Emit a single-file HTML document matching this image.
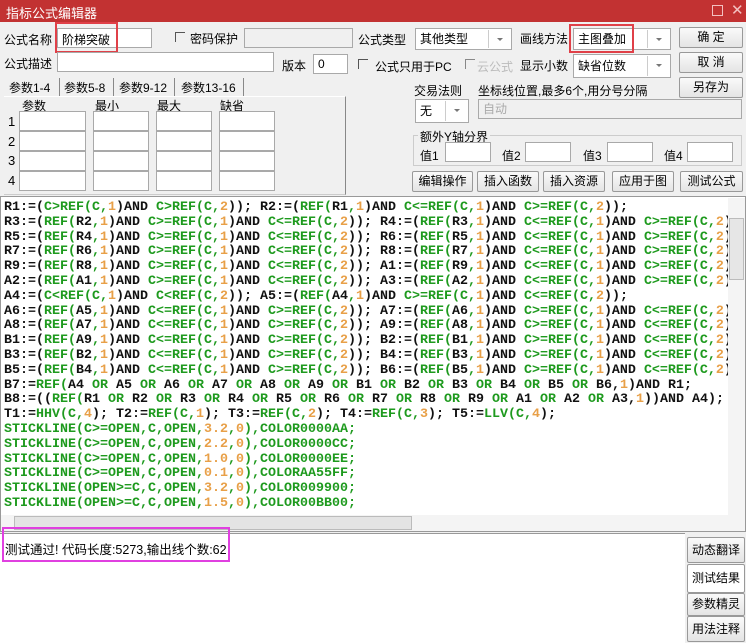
<!DOCTYPE html>
<html><head><meta charset="utf-8">
<style>
*{box-sizing:border-box;margin:0;padding:0}
body{width:746px;height:643px;overflow:hidden;background:#f0f0f0;position:relative;font-family:"Liberation Sans","Noto Sans CJK SC",sans-serif;font-size:12px;color:#000}
.a{position:absolute;white-space:nowrap}
.in{position:absolute;background:#fff;border:1px solid #a9a9a9}
.btn{position:absolute;background:linear-gradient(#fafafa,#e4e4e4);border:1px solid #999;text-align:center;font-size:12px;line-height:18px;border-radius:2px}
.sel{position:absolute;background:#fff;border:1px solid #a9a9a9;padding-left:4px;line-height:20px}
.sel:after{content:"";position:absolute;right:8px;top:9px;border:3px solid transparent;border-top:3px solid #777}
.sel i{position:absolute;right:22px;top:1px;bottom:1px;border-left:1px solid #ccc}
.cb{position:absolute;width:10px;height:10px;border-left:1px solid #555;border-top:1px solid #555}
.red{position:absolute;border:2px solid #e04048}
#code{position:absolute;left:1px;top:198px;width:727px;height:316px;background:#fff;overflow:hidden;font-family:"Liberation Mono",monospace;font-weight:bold;font-size:13.33px;line-height:14.8px;padding:3px 0 0 3px;color:#111}
#code div{white-space:pre;height:14.8px}
g{color:#1e9a1e}o{color:#e8a048}
</style></head><body>
<div class="a" style="left:0;top:0;width:746px;height:22px;background:#c23232"></div>
<div class="a" style="left:6px;top:3px;color:#fff;font-size:13px">指标公式编辑器</div>
<div class="a" style="left:712px;top:5px;width:11px;height:11px;border:1px solid #f3c0c0"></div>
<div class="a" style="left:731px;top:1px;color:#f3c0c0;font-size:15px">✕</div>

<div class="a" style="left:4px;top:31px">公式名称</div>
<div class="in" style="left:57px;top:28px;width:95px;height:20px"></div>
<div class="a" style="left:62px;top:31px">阶梯突破</div>
<div class="red" style="left:55px;top:22px;width:63px;height:31px"></div>
<div class="cb" style="left:175px;top:32px"></div>
<div class="a" style="left:190px;top:30px">密码保护</div>
<div class="in" style="left:244px;top:28px;width:109px;height:20px;background:#f0f0f0"></div>
<div class="a" style="left:358px;top:31px">公式类型</div>
<div class="sel" style="left:415px;top:28px;width:97px;height:22px">其他类型<i></i></div>
<div class="a" style="left:520px;top:30px">画线方法</div>
<div class="sel" style="left:573px;top:28px;width:98px;height:22px">主图叠加<i></i></div>
<div class="red" style="left:569px;top:24px;width:65px;height:29px"></div>
<div class="btn" style="left:679px;top:27px;width:64px;height:21px">确 定</div>

<div class="a" style="left:4px;top:55px">公式描述</div>
<div class="in" style="left:57px;top:52px;width:217px;height:20px"></div>
<div class="a" style="left:282px;top:57px">版本</div>
<div class="in" style="left:313px;top:54px;width:35px;height:20px;padding-left:4px;line-height:18px">0</div>
<div class="cb" style="left:358px;top:59px"></div>
<div class="a" style="left:375px;top:58px">公式只用于PC</div>
<div class="cb" style="left:465px;top:59px;border-color:#888"></div>
<div class="a" style="left:477px;top:58px;color:#bbb">云公式</div>
<div class="a" style="left:520px;top:57px">显示小数</div>
<div class="sel" style="left:573px;top:54px;width:98px;height:24px;line-height:22px">缺省位数<i></i></div>
<div class="btn" style="left:679px;top:52px;width:64px;height:21px">取 消</div>

<div class="a" style="left:9px;top:79px">参数1-4</div>
<div class="a" style="left:59px;top:78px;height:18px;border-left:1px solid #888"></div>
<div class="a" style="left:64px;top:79px">参数5-8</div>
<div class="a" style="left:113px;top:78px;height:18px;border-left:1px solid #888"></div>
<div class="a" style="left:119px;top:79px">参数9-12</div>
<div class="a" style="left:174px;top:78px;height:18px;border-left:1px solid #888"></div>
<div class="a" style="left:181px;top:79px">参数13-16</div>
<div class="a" style="left:243px;top:78px;height:18px;border-left:1px solid #888"></div>
<div class="a" style="left:4px;top:96px;width:342px;height:99px;border-right:1px solid #888;border-bottom:1px solid #ccc;border-top:1px solid #fff"></div>
<div class="a" style="left:22px;top:97px">参数</div>
<div class="a" style="left:95px;top:97px">最小</div>
<div class="a" style="left:157px;top:97px">最大</div>
<div class="a" style="left:220px;top:97px">缺省</div>
<div class="a" style="left:8px;top:114px;font-size:13px">1</div>
<div class="a" style="left:8px;top:134px;font-size:13px">2</div>
<div class="a" style="left:8px;top:153px;font-size:13px">3</div>
<div class="a" style="left:8px;top:173px;font-size:13px">4</div>
<div class="in" style="left:19px;top:111px;width:67px;height:20px"></div><div class="in" style="left:93px;top:111px;width:56px;height:20px"></div><div class="in" style="left:156px;top:111px;width:56px;height:20px"></div><div class="in" style="left:219px;top:111px;width:56px;height:20px"></div>
<div class="in" style="left:19px;top:131px;width:67px;height:20px"></div><div class="in" style="left:93px;top:131px;width:56px;height:20px"></div><div class="in" style="left:156px;top:131px;width:56px;height:20px"></div><div class="in" style="left:219px;top:131px;width:56px;height:20px"></div>
<div class="in" style="left:19px;top:151px;width:67px;height:20px"></div><div class="in" style="left:93px;top:151px;width:56px;height:20px"></div><div class="in" style="left:156px;top:151px;width:56px;height:20px"></div><div class="in" style="left:219px;top:151px;width:56px;height:20px"></div>
<div class="in" style="left:19px;top:171px;width:67px;height:20px"></div><div class="in" style="left:93px;top:171px;width:56px;height:20px"></div><div class="in" style="left:156px;top:171px;width:56px;height:20px"></div><div class="in" style="left:219px;top:171px;width:56px;height:20px"></div>

<div class="a" style="left:414px;top:82px">交易法则</div>
<div class="a" style="left:478px;top:82px">坐标线位置,最多6个,用分号分隔</div>
<div class="btn" style="left:679px;top:77px;width:64px;height:21px">另存为</div>
<div class="sel" style="left:415px;top:99px;width:54px;height:24px;line-height:22px">无<i></i></div>
<div class="in" style="left:478px;top:99px;width:264px;height:20px;background:#f0f0f0;color:#aaa;padding-left:4px;line-height:18px">自动</div>
<div class="a" style="left:413px;top:135px;width:329px;height:31px;border:1px solid #ccc"></div>
<div class="a" style="left:418px;top:128px;background:#f0f0f0;padding:0 2px">额外Y轴分界</div>
<div class="a" style="left:420px;top:147px">值1</div><div class="in" style="left:445px;top:142px;width:46px;height:20px"></div>
<div class="a" style="left:502px;top:147px">值2</div><div class="in" style="left:525px;top:142px;width:46px;height:20px"></div>
<div class="a" style="left:583px;top:147px">值3</div><div class="in" style="left:607px;top:142px;width:46px;height:20px"></div>
<div class="a" style="left:664px;top:147px">值4</div><div class="in" style="left:687px;top:142px;width:46px;height:20px"></div>
<div class="btn" style="left:412px;top:171px;width:61px;height:21px">编辑操作</div>
<div class="btn" style="left:477px;top:171px;width:62px;height:21px">插入函数</div>
<div class="btn" style="left:543px;top:171px;width:62px;height:21px">插入资源</div>
<div class="btn" style="left:612px;top:171px;width:62px;height:21px">应用于图</div>
<div class="btn" style="left:680px;top:171px;width:63px;height:21px">测试公式</div>

<div class="a" style="left:0;top:196px;width:746px;height:336px;border:1px solid #999;background:#fff"></div>
<div id="code">
<div>R1:=(<g>C&gt;REF(C,</g><o>1</o>)AND <g>C&gt;REF(C,</g><o>2</o>)); R2:=(<g>REF(</g>R1<g>,</g><o>1</o>)AND <g>C&lt;=REF(C,</g><o>1</o>)AND <g>C&gt;=REF(C,</g><o>2</o>));</div>
<div>R3:=(<g>REF(</g>R2<g>,</g><o>1</o>)AND <g>C&gt;=REF(C,</g><o>1</o>)AND <g>C&lt;=REF(C,</g><o>2</o>)); R4:=(<g>REF(</g>R3<g>,</g><o>1</o>)AND <g>C&lt;=REF(C,</g><o>1</o>)AND <g>C&gt;=REF(C,</g><o>2</o>));</div>
<div>R5:=(<g>REF(</g>R4<g>,</g><o>1</o>)AND <g>C&gt;=REF(C,</g><o>1</o>)AND <g>C&lt;=REF(C,</g><o>2</o>)); R6:=(<g>REF(</g>R5<g>,</g><o>1</o>)AND <g>C&lt;=REF(C,</g><o>1</o>)AND <g>C&gt;=REF(C,</g><o>2</o>));</div>
<div>R7:=(<g>REF(</g>R6<g>,</g><o>1</o>)AND <g>C&gt;=REF(C,</g><o>1</o>)AND <g>C&lt;=REF(C,</g><o>2</o>)); R8:=(<g>REF(</g>R7<g>,</g><o>1</o>)AND <g>C&lt;=REF(C,</g><o>1</o>)AND <g>C&gt;=REF(C,</g><o>2</o>));</div>
<div>R9:=(<g>REF(</g>R8<g>,</g><o>1</o>)AND <g>C&gt;=REF(C,</g><o>1</o>)AND <g>C&lt;=REF(C,</g><o>2</o>)); A1:=(<g>REF(</g>R9<g>,</g><o>1</o>)AND <g>C&lt;=REF(C,</g><o>1</o>)AND <g>C&gt;=REF(C,</g><o>2</o>));</div>
<div>A2:=(<g>REF(</g>A1<g>,</g><o>1</o>)AND <g>C&gt;=REF(C,</g><o>1</o>)AND <g>C&lt;=REF(C,</g><o>2</o>)); A3:=(<g>REF(</g>A2<g>,</g><o>1</o>)AND <g>C&lt;=REF(C,</g><o>1</o>)AND <g>C&gt;=REF(C,</g><o>2</o>));</div>
<div>A4:=(<g>C&lt;REF(C,</g><o>1</o>)AND <g>C&lt;REF(C,</g><o>2</o>)); A5:=(<g>REF(</g>A4<g>,</g><o>1</o>)AND <g>C&gt;=REF(C,</g><o>1</o>)AND <g>C&lt;=REF(C,</g><o>2</o>));</div>
<div>A6:=(<g>REF(</g>A5<g>,</g><o>1</o>)AND <g>C&lt;=REF(C,</g><o>1</o>)AND <g>C&gt;=REF(C,</g><o>2</o>)); A7:=(<g>REF(</g>A6<g>,</g><o>1</o>)AND <g>C&gt;=REF(C,</g><o>1</o>)AND <g>C&lt;=REF(C,</g><o>2</o>));</div>
<div>A8:=(<g>REF(</g>A7<g>,</g><o>1</o>)AND <g>C&lt;=REF(C,</g><o>1</o>)AND <g>C&gt;=REF(C,</g><o>2</o>)); A9:=(<g>REF(</g>A8<g>,</g><o>1</o>)AND <g>C&gt;=REF(C,</g><o>1</o>)AND <g>C&lt;=REF(C,</g><o>2</o>));</div>
<div>B1:=(<g>REF(</g>A9<g>,</g><o>1</o>)AND <g>C&lt;=REF(C,</g><o>1</o>)AND <g>C&gt;=REF(C,</g><o>2</o>)); B2:=(<g>REF(</g>B1<g>,</g><o>1</o>)AND <g>C&gt;=REF(C,</g><o>1</o>)AND <g>C&lt;=REF(C,</g><o>2</o>));</div>
<div>B3:=(<g>REF(</g>B2<g>,</g><o>1</o>)AND <g>C&lt;=REF(C,</g><o>1</o>)AND <g>C&gt;=REF(C,</g><o>2</o>)); B4:=(<g>REF(</g>B3<g>,</g><o>1</o>)AND <g>C&gt;=REF(C,</g><o>1</o>)AND <g>C&lt;=REF(C,</g><o>2</o>));</div>
<div>B5:=(<g>REF(</g>B4<g>,</g><o>1</o>)AND <g>C&lt;=REF(C,</g><o>1</o>)AND <g>C&gt;=REF(C,</g><o>2</o>)); B6:=(<g>REF(</g>B5<g>,</g><o>1</o>)AND <g>C&gt;=REF(C,</g><o>1</o>)AND <g>C&lt;=REF(C,</g><o>2</o>));</div>
<div>B7:=<g>REF(</g>A4 <g>OR</g> A5 <g>OR</g> A6 <g>OR</g> A7 <g>OR</g> A8 <g>OR</g> A9 <g>OR</g> B1 <g>OR</g> B2 <g>OR</g> B3 <g>OR</g> B4 <g>OR</g> B5 <g>OR</g> B6,<o>1</o>)AND R1;</div>
<div>B8:=((<g>REF(</g>R1 <g>OR</g> R2 <g>OR</g> R3 <g>OR</g> R4 <g>OR</g> R5 <g>OR</g> R6 <g>OR</g> R7 <g>OR</g> R8 <g>OR</g> R9 <g>OR</g> A1 <g>OR</g> A2 <g>OR</g> A3,<o>1</o>))AND A4);</div>
<div>T1:=<g>HHV(C,</g><o>4</o>); T2:=<g>REF(C,</g><o>1</o>); T3:=<g>REF(C,</g><o>2</o>); T4:=<g>REF(C,</g><o>3</o>); T5:=<g>LLV(C,</g><o>4</o>);</div>
<div><g>STICKLINE(C&gt;=OPEN,C,OPEN,</g><o>3.2</o><g>,</g><o>0</o><g>),COLOR0000AA;</g></div>
<div><g>STICKLINE(C&gt;=OPEN,C,OPEN,</g><o>2.2</o><g>,</g><o>0</o><g>),COLOR0000CC;</g></div>
<div><g>STICKLINE(C&gt;=OPEN,C,OPEN,</g><o>1.0</o><g>,</g><o>0</o><g>),COLOR0000EE;</g></div>
<div><g>STICKLINE(C&gt;=OPEN,C,OPEN,</g><o>0.1</o><g>,</g><o>0</o><g>),COLORAA55FF;</g></div>
<div><g>STICKLINE(OPEN&gt;=C,C,OPEN,</g><o>3.2</o><g>,</g><o>0</o><g>),COLOR009900;</g></div>
<div><g>STICKLINE(OPEN&gt;=C,C,OPEN,</g><o>1.5</o><g>,</g><o>0</o><g>),COLOR00BB00;</g></div>
</div>
<div class="a" style="left:728px;top:198px;width:17px;height:317px;background:#f4f4f4"></div>
<div class="a" style="left:729px;top:218px;width:15px;height:62px;background:#e6e6e6;border:1px solid #bbb"></div>
<div class="a" style="left:1px;top:515px;width:744px;height:16px;background:#f4f4f4"></div>
<div class="a" style="left:14px;top:516px;width:398px;height:14px;background:#e4e4e4;border:1px solid #bbb"></div>

<div class="a" style="left:0;top:533px;width:685px;height:110px;background:#fff;border-top:1px solid #999"></div>
<div class="a" style="left:5px;top:539px;font-size:12.5px">测试通过! 代码长度:5273,输出线个数:62</div>
<div class="a" style="left:2px;top:527px;width:228px;height:35px;border:2px solid #e040e0"></div>
<div class="btn" style="left:687px;top:537px;width:58px;height:26px;line-height:24px">动态翻译</div>
<div class="btn" style="left:687px;top:564px;width:58px;height:29px;line-height:27px;background:#fff">测试结果</div>
<div class="btn" style="left:687px;top:593px;width:58px;height:23px;line-height:21px">参数精灵</div>
<div class="btn" style="left:687px;top:616px;width:58px;height:26px;line-height:24px">用法注释</div>
</body></html>
